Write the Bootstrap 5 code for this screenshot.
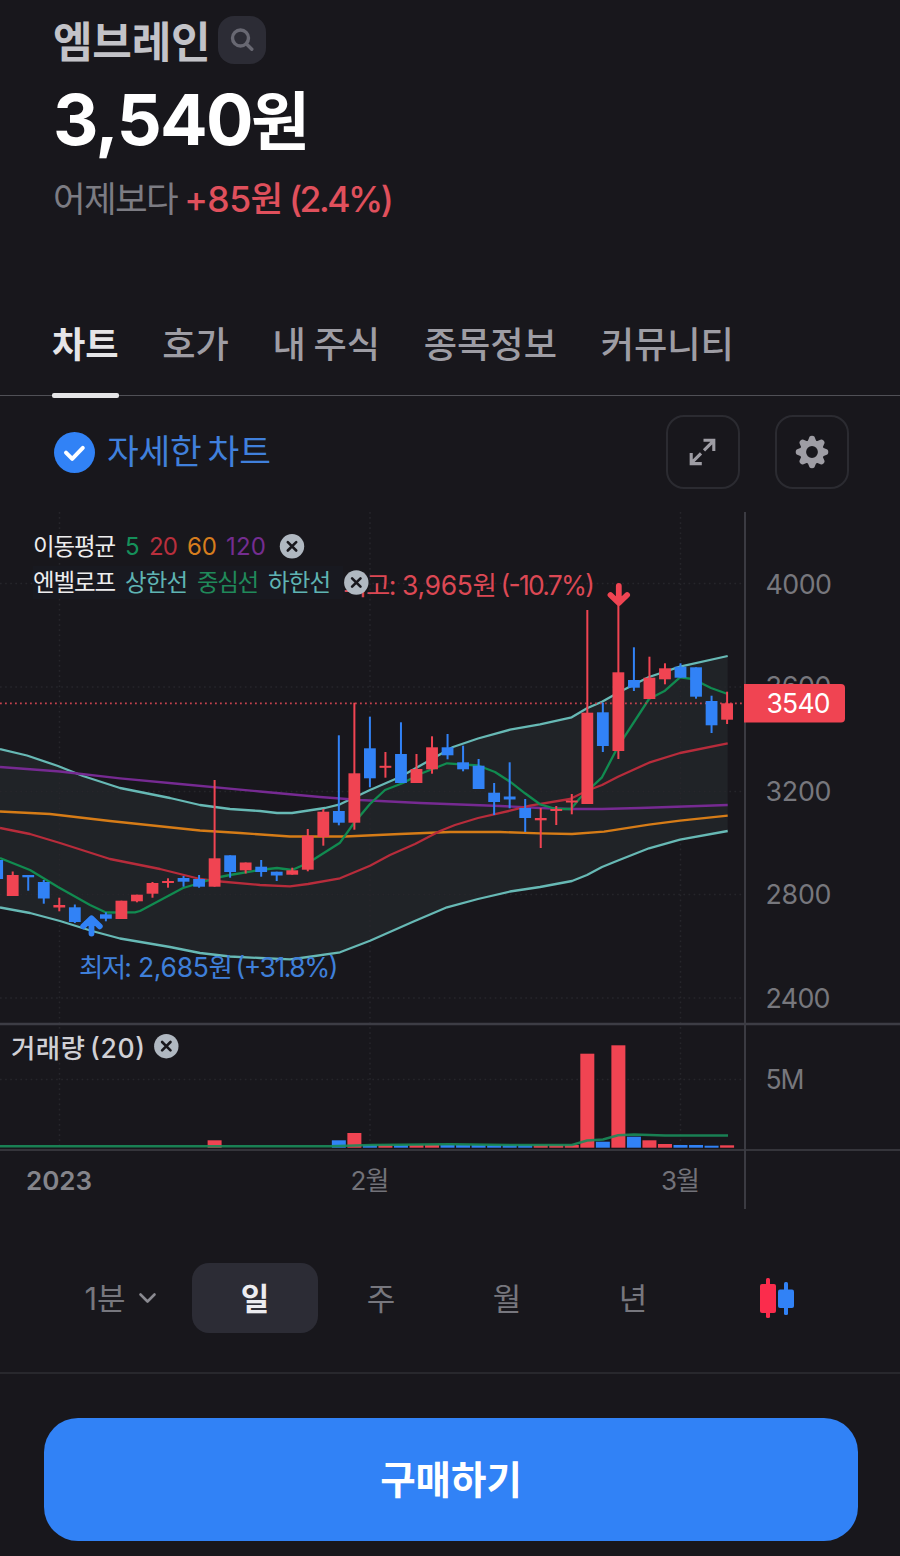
<!DOCTYPE html>
<html lang="ko" data-bs-theme="dark">
<head>
<meta charset="utf-8">
<meta name="viewport" content="width=device-width, initial-scale=1">
<title>엠브레인</title>
<link href="https://cdn.jsdelivr.net/npm/bootstrap@5.3.0/dist/css/bootstrap.min.css" rel="stylesheet">
<style>
  :root { --ink:#18171c; --rise:#f04452; --fall:#3182f6; }
  body { background:var(--ink); font-family:Inter,"Noto Sans CJK KR",sans-serif; width:900px; height:1556px; overflow:hidden; line-height:1; }
  .quote { height:328px; padding:16px 53px 0; }
  .title-row { gap:8px; }
  .stock-name { font-size:43px; font-weight:700; color:#c3c3c8; letter-spacing:-.2px; line-height:48px; margin:0; padding-top:2px; height:48px; }
  .find { width:48px; height:48px; border-radius:16px; background:#2c2c35; }
  .price { font-size:70.5px; font-weight:650; color:#fff; line-height:84px; margin-top:14px; letter-spacing:-1.7px; }
  .price span { font-size:64px; letter-spacing:0; font-weight:700; margin-left:-1px; }
  .change { font-size:35.5px; line-height:44px; margin-top:14px; color:#7c7c83; letter-spacing:-1.7px; word-spacing:-1px; }
  .change b { font-weight:500; color:#e0505c; letter-spacing:-.5px; word-spacing:-2.8px; }
  .change b i { font-style:normal; letter-spacing:-2.5px; }
  .tabs { height:69px; padding:0 52px; gap:43.7px; border-bottom:1px solid #505056; margin-top:-1px; }
  .tabs a { font-size:36.2px; font-weight:500; color:#9e9da4; text-decoration:none; line-height:37px; height:70.5px; position:relative; white-space:nowrap; word-spacing:-2px; }
  .tabs a.on { color:#e5e5e7; font-weight:700; }
  .tabs a.on::after { content:""; position:absolute; left:0; right:0; bottom:0; height:5px; border-radius:2px; background:#e5e5e7; }
  .tools { height:116px; padding:19px 51px 0 54px; }
  .detail { font-size:34.5px; color:#4080dc; letter-spacing:-.2px; word-spacing:-3.5px; gap:12px; height:74px; }
  .tool-pair { gap:35px; }
  .tool { width:74px; height:74px; border:2px solid #2b2b31; border-radius:18px; }
  .chart { display:block; }
  .periods { height:165px; padding:54px 0 0 66px; border-bottom:2px solid #28282d; }
  .periods button { width:126px; height:70px; border:0; background:none; font-size:31px; color:#77777e; border-radius:17px; }
  .periods button.minute { padding-right:22px; }
  .periods button.on { background:#2c2c35; color:#ececf0; font-weight:700; }
  .kind { width:162px; height:70px; }
  .buy { margin:44px 42px 0 44px; padding-top:2px; height:123px; border-radius:34px; background:#3182f6; color:#fff; font-size:38.5px; font-weight:700; border:0; width:814px; }
</style>
</head>
<body>
<header class="quote">
  <div class="title-row d-flex align-items-center">
    <h1 class="stock-name">엠브레인</h1>
    <div class="find d-flex align-items-center justify-content-center">
      <svg width="24" height="24" viewBox="0 0 24 24" fill="none" stroke="#686872" stroke-width="3.4" stroke-linecap="round"><circle cx="10.5" cy="10" r="8"/><path d="M16.5 16l5.300 5.300"/></svg>
    </div>
  </div>
  <div class="price">3,540<span>원</span></div>
  <div class="change">어제보다 <b>+85원 <i>(2.4%)</i></b></div>
</header>
<nav class="tabs d-flex">
  <a class="on" href="#">차트</a><a href="#">호가</a><a href="#">내 주식</a><a href="#">종목정보</a><a href="#">커뮤니티</a>
</nav>
<div class="tools d-flex justify-content-between align-items-start">
  <div class="detail d-flex align-items-center">
    <svg width="41" height="41" viewBox="0 0 41 41"><circle cx="20.5" cy="20.5" r="20.5" fill="#3182f6"/><path d="M12 20.6l6.2 6.2 10.6-10.9" fill="none" stroke="#fff" stroke-width="4" stroke-linecap="round" stroke-linejoin="round"/></svg>
    <span>자세한 차트</span>
  </div>
  <div class="tool-pair d-flex">
    <div class="tool d-flex align-items-center justify-content-center">
      <svg width="28" height="28" viewBox="0 0 28 28" fill="none" stroke="#9e9da4" stroke-width="3.1"><path d="M15 12.400L25 2.400M14.500 2.200h10.300V13M12 15.400L2 25.400M2.200 15v10.600H12.800"/></svg>
    </div>
    <div class="tool d-flex align-items-center justify-content-center">
      <svg id="gear" width="34" height="34" viewBox="-17 -17 34 34" fill="#9e9da4"></svg>
    </div>
  </div>
</div>
<svg class="chart" id="chart" width="900" height="697" viewBox="0 512 900 697"></svg>
<div class="periods d-flex">
  <button class="minute d-flex align-items-center justify-content-center">1분<svg class="ms-2" width="24" height="20" viewBox="0 0 24 20" fill="none" stroke="#8a8a91" stroke-width="2.6" stroke-linecap="round" stroke-linejoin="round"><path d="M6.5 6.5l7 7 7-7"/></svg></button>
  <button class="on">일</button><button>주</button><button>월</button><button>년</button>
  <div class="kind d-flex align-items-center justify-content-center">
    <svg width="36" height="42" viewBox="0 0 36 42"><g fill="#fb2c4c"><rect x="1" y="7" width="16" height="29" rx="2"/><rect x="7" y="1" width="4" height="40" rx="1.5"/></g><g fill="#3182f6"><rect x="19" y="12.500" width="16" height="18.500" rx="2"/><rect x="25" y="5" width="4" height="33" rx="1.500"/></g></svg>
  </div>
</div>
<button class="buy">구매하기</button>
<script>
const RED='#f04452', BLUE='#3182f6';
const xAt=i=>214.6+15.53*(i-13);
// direction, high, low, body top, body bottom
const candles=[['b',858,880,860,879],['r',871.5,896,875,896],['b',875,890.7,875,877.3],['b',880,903.7,882,898.5],['r',897.7,911.3,905,907.5],['b',904.5,923,907.3,922],['b',918,930,921,926],['b',912.3,921.3,914.3,918.7],['r',900.7,919,900.7,919],['r',894.7,902.3,894.7,901.3],['r',882,897.7,883,893.7],['r',878.3,887.7,881,883],['b',876,886.7,878,881.7],['b',875,887.7,879,886.7],['r',780,886.7,858.3,886.7],['b',855.3,877.7,855.3,872],['r',862.5,873.5,862.5,870.3],['b',860,876.7,866.7,872],['b',871.7,881,871.7,875.5],['r',867.7,874.7,870.3,874.7],['r',829,871.3,835.7,869.7],['r',809,845.7,811.7,837],['b',735.3,825.3,811,822.7],['r',702.7,829.7,773.3,822.7],['b',716.7,787.3,748.3,778.3],['r',752,777.7,765.8,767.8],['b',722.3,783,754,783],['r',754,783,769,783],['r',736.3,773.7,747.3,769.3],['b',734,759.3,747.3,755.3],['b',745.7,771.3,762.3,769.3],['b',759,789,765.7,789],['b',783,815,792.7,802],['b',762.3,808.3,796.5,799.5],['b',799,832,808,818],['r',808,848,818,820.3],['r',806,825,809,811],['r',794,814.3,800.5,802.5],['r',610,804,712.7,804],['b',702.7,752,712.3,746],['r',600,759,672.3,751],['b',647.3,691,680,687.7],['r',656.7,699,677.7,699],['r',663.3,684.3,668.3,679.3],['b',663.3,677.7,666.7,677.7],['b',667.3,698.7,667.3,696.7],['b',695.7,733,701,725.3],['r',691.7,724,703.3,719.7]];
const volumeTop={13:1140.3,21:1140.3,22:1133,37:1053.7,38:1141.7,39:1045.3,40:1136.7,41:1140.3,42:1144,43:1145,44:1145,45:1145.7,46:1145.3};
const upper='0,749 27,755.5 58,766 83,776 120,788 170,798 200,805 230,809 260,811 277,813 292,813 325,808 340,804.3 370,790 400,777 432,759 453,747 478,738.5 510,729.7 540,724.3 571.7,717.3 587,708.3 602,701.7 618,692.7 637,683 649,677 680,666.7 727.7,656';
const lower='0,907.5 30,913 60,921 92,931 120,938.5 170,947 200,953 230,956.5 260,958 290,959.3 308,957 340,952.3 370,940.7 413,921.7 447,907.3 478,899 510,891.5 540,887 572,881 587,875 602,867 618,860.5 649,848.3 680,839.7 727.7,831';
const ma={
 purple:['#762a92','0,767 60,771.5 120,778.3 180,784 260,791.5 320,797 360,800 420,803 500,806 540,808 570,809 602,809 640,808 727.7,805'],
 orange:['#d67c17','0,811.5 50,814 110,821 200,830.500 240,833 290,836.500 345,836.500 400,834 450,832 500,832 540,833.300 572,834 604,831.700 649,824.700 680,820.700 727.7,815.700'],
 red:['#b72c3b','0,828 30,834 60,843 110,859 160,869 200,879 215,881 260,885 290,886.3 308,884 340,878.3 370,865.700 390,855 415,844 440,831 455,825 478,818 510,810.7 530,805.7 570,799 587,790.7 602,785 618,776.7 649,762.7 680,753 727.7,743.3'],
 green:['#118b50','0,858 30,870 58,887 90,905 106,912.5 135,912.3 140,911 183,888 200,883 215,878 230,875 260,870 277,868 292,870 308,863 340,842.7 354,823 370,804 385,790 403,783 420,774 447,763.3 478,765.5 495,772 510,781.7 525,793.3 540,804.3 556,809 571,809 580,798 602,777.3 618,746.7 649,699 665,690.7 680,677.3 693,679 711,688 727.7,694']};
let s='';
const line=(x1,y1,x2,y2,c,w,extra='')=>`<line x1="${x1}" y1="${y1}" x2="${x2}" y2="${y2}" stroke="${c}" stroke-width="${w}" ${extra}/>`;
const text=(x,y,size,c,t,len,w=400)=>`<text x="${x}" y="${y}" font-size="${size}" fill="${c}" font-weight="${w}" textLength="${len}">${t}</text>`;
const poly=(p,c,w=2.3)=>`<polyline points="${p}" fill="none" stroke="${c}" stroke-width="${w}" stroke-linejoin="round"/>`;
s+=`<polygon points="${upper} ${lower.split(' ').reverse().join(' ')}" fill="#202327"/>`;
[59.5,370,680.5].forEach(x=>s+=line(x,512,x,1147,'#26262b',1.5,'stroke-dasharray="1.7 3.4"'));
[583.5,687,791.500,894.500,998,1079.500].forEach(y=>s+=line(0,y,744,y,'#26262b',1.5,'stroke-dasharray="1.7 3.4"'));
s+=text(765.500,593.500,26.800,'#77777d','4000',66.500)+text(765.500,696,26.800,'#77777d','3600',66)+text(765.500,800.500,26.800,'#77777d','3200',66)+text(765.500,904,26.800,'#77777d','2800',66)+text(765.500,1008,26.800,'#77777d','2400',65)+text(765.500,1089,26.500,'#77777d','5M',39);
s+=poly(upper,'#67b9b5')+poly(lower,'#67b9b5');
for(const k of ['purple','orange','red','green']) s+=poly(ma[k][1],ma[k][0]);
s+=line(0,703.3,744,703.3,'#c4424e',1.8,'stroke-dasharray="1.8 3.2"');
s+=line(0,1024,900,1024,'#3d3d45',2.6);
candles.forEach(([d,h,l,t,b],k)=>{const c=d=='r'?RED:BLUE,x=xAt(k-1);
 s+=`<rect x="${x-1}" y="${h}" width="2" height="${l-h}" fill="${c}"/><rect x="${x-5.9}" y="${t}" width="11.8" height="${b-t}" fill="${c}"/>`;
 const i=k-1,v=volumeTop[i]||(i>22?1145:0);
 if(v) s+=`<rect x="${x-7}" y="${v}" width="14" height="${1147.7-v}" fill="${c}"/>`;});
s+=line(0,1150,900,1150,'#35353b',2)+line(745,512,745,1209,'#3b3b42',2);
s+=`<polyline points="0,1146.3 330,1146.300 372,1145 450,1144.300 520,1145 572,1145 587,1140.500 603,1139.500 618,1135.300 634,1134.500 665,1135.500 728,1135.500" fill="none" stroke="#198c5a" stroke-width="2.500" stroke-opacity=".9"/>`;
s+=`<path d="M618.800 586v16M610.500 595l8.300 8 8.300-8" fill="none" stroke="${RED}" stroke-width="5.800" stroke-linecap="round" stroke-linejoin="round"/>`;
s+=`<path d="M91.500 933.500v-14M83.200 926.300l8.300-8 8.300 8" fill="none" stroke="${BLUE}" stroke-width="5.800" stroke-linecap="round" stroke-linejoin="round"/>`;
s+=text(79,976.500,26.500,'#3f7fd9','최저:',53)+text(138,976.500,26.500,'#3f7fd9','2,685원',95)+text(235.500,976.500,26.500,'#3f7fd9','(+31.8%)',103);
s+=text(343,594.500,26.500,'#dc4854','최고:',53.500)+text(402,594.500,26.500,'#dc4854','3,965원',95)+text(500.500,594.500,26.500,'#dc4854','(-10.7%)',94.500);
s+=`<rect x="33" y="566" width="310" height="33" fill="#181920"/>`;
s+=text(33,555,23.500,'#ededee','이동평균',83)+text(125,555,24,'#15905a','5',14)+text(149,555,24,'#b92f3d','20',29)+text(187,555,24,'#d67d1e','60',30)+text(226,555,24,'#742d90','120',40);
s+=text(33,590.500,23.500,'#ededee','엔벨로프',83)+text(125,590.500,23.500,'#5fb4b3','상한선',63)+text(197,590.500,23.500,'#20895a','중심선',62)+text(268,590.500,23.500,'#5fb4b3','하한선',63);
const close=(x,y)=>`<circle cx="${x}" cy="${y}" r="12.200" fill="#b0b8c1"/><path d="M${x-4.200} ${y-4.200}l8.400 8.400m0-8.400l-8.400 8.400" stroke="#18171c" stroke-width="2.600" stroke-linecap="round"/>`;
s+=close(292,546.300)+close(356.300,582.500)+close(166.300,1046.200);
s+=`<path d="M744 684h97q4 0 4 4v30.500q0 4-4 4h-97z" fill="${RED}"/>`+text(766.500,713,26.500,'#fff','3540',64);
s+=text(11,1057.500,26.500,'#d0d0d5','거래량',74,500)+text(90,1057.500,26.500,'#d0d0d5','(20)',55,500);
s+=text(26,1189.500,26,'#85858b','2023',66,600)+text(350.500,1189.500,26,'#727279','2월',39)+text(661,1189.500,26,'#727279','3월',39);
document.getElementById('chart').innerHTML=s;
// cog wheel: eight tapered teeth around a ring
let g='';
for(let a=0;a<360;a+=45) g+=`<path d="M-4.400-10.500L-2.500-15.300Q-1.800-16.300 0-16.300T2.500-15.300L4.400-10.500z" transform="rotate(${a})"/>`;
g+='<circle r="9" fill="none" stroke="#9e9da4" stroke-width="6.200"/>';
document.getElementById('gear').innerHTML=g;
</script>
<script src="https://cdn.jsdelivr.net/npm/bootstrap@5.3.0/dist/js/bootstrap.bundle.min.js"></script>
</body>
</html>
